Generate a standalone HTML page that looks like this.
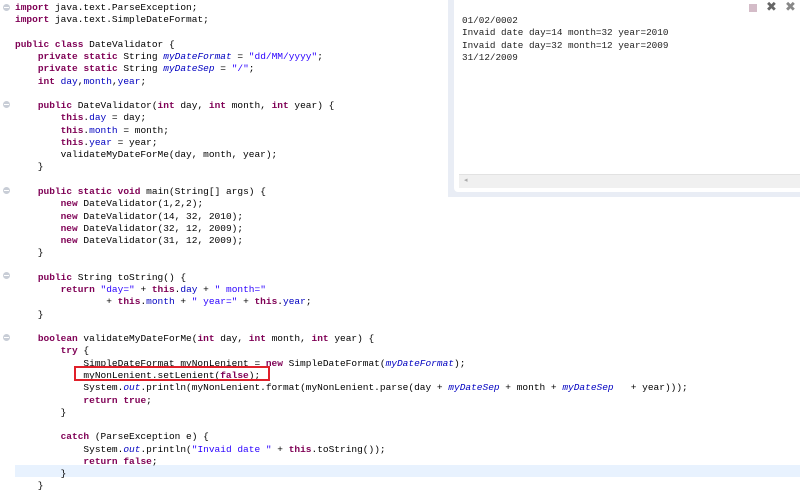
<!DOCTYPE html>
<html><head><meta charset="utf-8"><style>
html,body{margin:0;padding:0;width:800px;height:493px;overflow:hidden;background:#fff;position:relative}
pre{margin:0;font-family:"Liberation Mono",monospace;font-size:9.5px;line-height:12.26px;color:#000}
#code{position:absolute;left:15px;top:2px}
.k{color:#7f0055;font-weight:bold}
.s{color:#2a00ff}
.f{color:#0000c0}
.i{color:#0000c0;font-style:italic}
.fold{position:absolute;left:3px;width:7px;height:7px;border-radius:50%;background:#c8cdd6;}
.fold:after{content:"";position:absolute;left:1px;right:1px;top:3px;height:1px;background:#fff}
#hl{position:absolute;left:15px;top:465px;width:785px;height:12px;background:#e8f2fe}
#box{position:absolute;left:74px;top:366px;width:196px;height:15px;border:2px solid #e0202a;box-sizing:border-box}
#con{position:absolute;left:448px;top:0;width:352px;height:197px;background:#e9edf5}
#coni{position:absolute;left:454px;top:0;width:346px;height:192px;background:#fff;border-radius:0 0 0 4px}
#cont{position:absolute;left:462px;top:15px;color:#222;font-size:9.3px}
#sb{position:absolute;left:459px;top:174px;width:341px;height:13px;background:#f0f0f0;border-top:1px solid #e2e2e2}
</style></head><body>
<div id="hl"></div>
<div class="fold" style="top:4px"></div>
<div class="fold" style="top:101px"></div>
<div class="fold" style="top:187px"></div>
<div class="fold" style="top:272px"></div>
<div class="fold" style="top:334px"></div>
<pre id="code"><span class="k">import</span> java.text.ParseException;
<span class="k">import</span> java.text.SimpleDateFormat;

<span class="k">public</span> <span class="k">class</span> DateValidator {
    <span class="k">private</span> <span class="k">static</span> String <span class="i">myDateFormat</span> = <span class="s">"dd/MM/yyyy"</span>;
    <span class="k">private</span> <span class="k">static</span> String <span class="i">myDateSep</span> = <span class="s">"/"</span>;
    <span class="k">int</span> <span class="f">day</span>,<span class="f">month</span>,<span class="f">year</span>;

    <span class="k">public</span> DateValidator(<span class="k">int</span> day, <span class="k">int</span> month, <span class="k">int</span> year) {
        <span class="k">this</span>.<span class="f">day</span> = day;
        <span class="k">this</span>.<span class="f">month</span> = month;
        <span class="k">this</span>.<span class="f">year</span> = year;
        validateMyDateForMe(day, month, year);
    }

    <span class="k">public</span> <span class="k">static</span> <span class="k">void</span> main(String[] args) {
        <span class="k">new</span> DateValidator(1,2,2);
        <span class="k">new</span> DateValidator(14, 32, 2010);
        <span class="k">new</span> DateValidator(32, 12, 2009);
        <span class="k">new</span> DateValidator(31, 12, 2009);
    }

    <span class="k">public</span> String toString() {
        <span class="k">return</span> <span class="s">"day="</span> + <span class="k">this</span>.<span class="f">day</span> + <span class="s">" month="</span>
                + <span class="k">this</span>.<span class="f">month</span> + <span class="s">" year="</span> + <span class="k">this</span>.<span class="f">year</span>;
    }

    <span class="k">boolean</span> validateMyDateForMe(<span class="k">int</span> day, <span class="k">int</span> month, <span class="k">int</span> year) {
        <span class="k">try</span> {
            SimpleDateFormat myNonLenient = <span class="k">new</span> SimpleDateFormat(<span class="i">myDateFormat</span>);
            myNonLenient.setLenient(<span class="k">false</span>);
            System.<span class="i">out</span>.println(myNonLenient.format(myNonLenient.parse(day + <span class="i">myDateSep</span> + month + <span class="i">myDateSep</span>   + year)));
            <span class="k">return</span> <span class="k">true</span>;
        }

        <span class="k">catch</span> (ParseException e) {
            System.<span class="i">out</span>.println(<span class="s">"Invaid date "</span> + <span class="k">this</span>.toString());
            <span class="k">return</span> <span class="k">false</span>;
        }
    }</pre>
<div id="box"></div>
<div id="con"></div>
<div id="coni"></div>
<div style="position:absolute;left:749px;top:4px;width:8px;height:8px;background:#d4bcc8"></div>
<div style="position:absolute;left:766px;top:0px;font:bold 13px 'DejaVu Sans',sans-serif;color:#666">✖</div>
<div style="position:absolute;left:785px;top:0px;font:bold 13px 'DejaVu Sans',sans-serif;color:#888">✖</div>
<pre id="cont">01/02/0002
Invaid date day=14 month=32 year=2010
Invaid date day=32 month=12 year=2009
31/12/2009</pre>
<div id="sb"><span style="position:absolute;left:5px;top:1px;font-size:7px;color:#aaa">◂</span></div>
</body></html>
